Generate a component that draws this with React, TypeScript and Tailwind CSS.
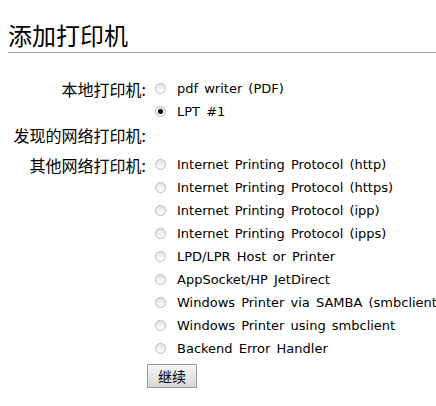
const latin = "font-['DejaVu_Sans','Noto_Sans_CJK_SC',sans-serif]";
const cjk = "font-['Noto_Sans_CJK_SC',sans-serif]";

type Option = { label: string; checked?: boolean };

const groups: { title: string; options: Option[]; spaceAfter?: boolean }[] = [
  {
    title: "本地打印机:",
    options: [{ label: "pdf writer (PDF)" }, { label: "LPT #1", checked: true }],
  },
  { title: "发现的网络打印机:", options: [], spaceAfter: true },
  {
    title: "其他网络打印机:",
    options: [
      { label: "Internet Printing Protocol (http)" },
      { label: "Internet Printing Protocol (https)" },
      { label: "Internet Printing Protocol (ipp)" },
      { label: "Internet Printing Protocol (ipps)" },
      { label: "LPD/LPR Host or Printer" },
      { label: "AppSocket/HP JetDirect" },
      { label: "Windows Printer via SAMBA (smbclient)" },
      { label: "Windows Printer using smbclient" },
      { label: "Backend Error Handler" },
    ],
  },
];

function Radio({ checked }: { checked?: boolean }) {
  return (
    <span className="ml-2 flex h-[11px] w-[11px] shrink-0 items-center justify-center rounded-full border border-[#b9b9b9] bg-gradient-to-b from-[#e4e4e4] to-white">
      {checked ? <span className="h-[5px] w-[5px] rounded-full bg-black"></span> : null}
    </span>
  );
}

function Row({ title, option }: { title?: string; option?: Option }) {
  return (
    <div className="flex h-[23px] items-center">
      <div className={`w-[146px] shrink-0 whitespace-nowrap text-right text-[16px] ${cjk}`}>{title}</div>
      {option ? (
        <div className="ml-px flex items-center">
          <Radio checked={option.checked} />
          <span className={`ml-[11px] whitespace-nowrap text-[13px] [word-spacing:2px] ${latin}`}>
            {option.label}
          </span>
        </div>
      ) : null}
    </div>
  );
}

export default function App() {
  return (
    <div className="h-[406px] w-[436px] overflow-hidden bg-white text-black">
      <h1
        className={`ml-2 border-b border-[#a0a0a0] pt-[21px] pb-[3px] text-[24px] leading-[28px] ${cjk}`}
      >
        添加打印机
      </h1>
      <div className="mt-6">
        {groups.map((g) => (
          <div key={g.title} className={g.spaceAfter ? "mb-[7px]" : ""}>
            {g.options.length === 0 ? (
              <Row title={g.title} />
            ) : (
              g.options.map((o, i) => (
                <Row key={o.label} title={i === 0 ? g.title : undefined} option={o} />
              ))
            )}
          </div>
        ))}
        <div className="mt-1 flex">
          <button
            className={`ml-[147px] h-[24px] w-[50px] border border-[#9a9a9a] bg-gradient-to-b from-[#f6f6f6] to-[#d6d6d6] text-[14px] leading-none ${cjk}`}
          >
            继续
          </button>
        </div>
      </div>
    </div>
  );
}
